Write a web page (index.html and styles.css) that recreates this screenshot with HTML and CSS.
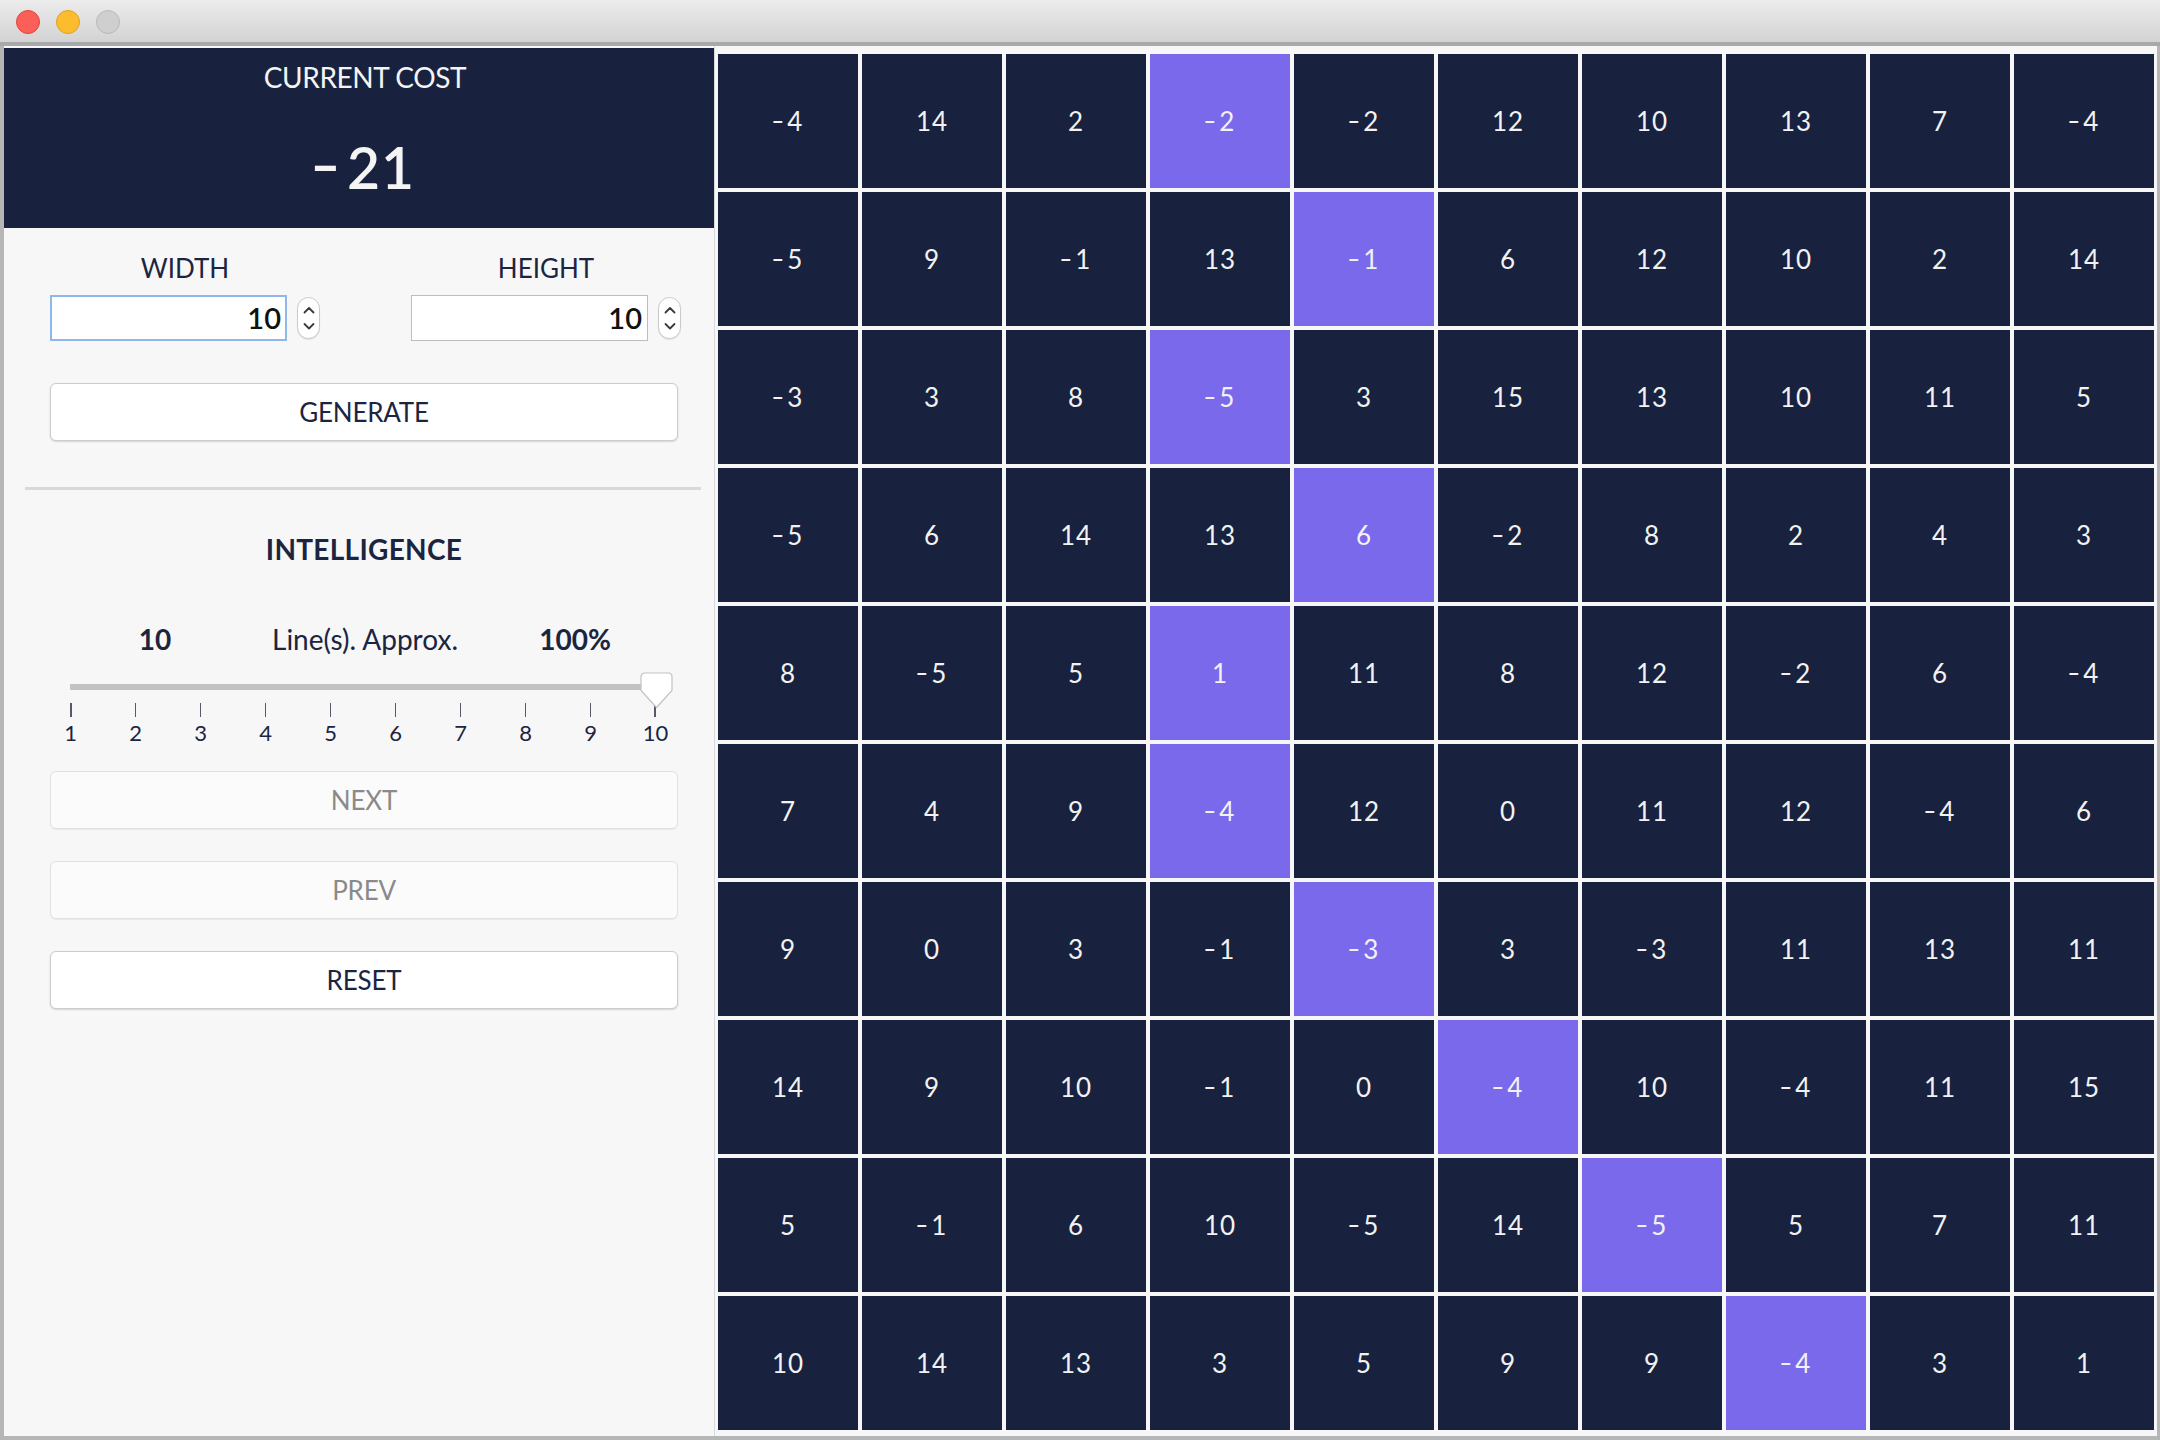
FILE: index.html
```html
<!DOCTYPE html>
<html>
<head>
<meta charset="utf-8">
<title>Min Cost Path</title>
<link rel="stylesheet" href="styles.css">
</head>
<body>
<div class="window">
  <div class="titlebar">
    <span class="light red"></span>
    <span class="light yellow"></span>
    <span class="light gray"></span>
  </div>
  <div class="main">
    <aside class="panel">
      <div class="cost">
        <div class="cost-title">CURRENT COST</div>
        <div class="cost-value"><span class="neg">-</span>21</div>
      </div>
      <div class="content">
        <div class="dims">
          <div class="dim">
            <div class="dim-label">WIDTH</div>
            <div class="dim-row">
              <div class="num-input focused">10</div>
              <div class="spinner">
                <svg width="12" height="30" viewBox="0 0 12 30"><path d="M1.5 9.5 L6 5 L10.5 9.5" fill="none" stroke="#3a3a3a" stroke-width="1.8" stroke-linecap="round" stroke-linejoin="round"/><path d="M1.5 21 L6 25.5 L10.5 21" fill="none" stroke="#3a3a3a" stroke-width="1.8" stroke-linecap="round" stroke-linejoin="round"/></svg>
              </div>
            </div>
          </div>
          <div class="dim">
            <div class="dim-label">HEIGHT</div>
            <div class="dim-row">
              <div class="num-input">10</div>
              <div class="spinner">
                <svg width="12" height="30" viewBox="0 0 12 30"><path d="M1.5 9.5 L6 5 L10.5 9.5" fill="none" stroke="#3a3a3a" stroke-width="1.8" stroke-linecap="round" stroke-linejoin="round"/><path d="M1.5 21 L6 25.5 L10.5 21" fill="none" stroke="#3a3a3a" stroke-width="1.8" stroke-linecap="round" stroke-linejoin="round"/></svg>
              </div>
            </div>
          </div>
        </div>
        <button class="btn btn-generate">GENERATE</button>
        <div class="divider"></div>
        <div class="section-title">INTELLIGENCE</div>
        <div class="stats">
          <span class="stat strong">10</span>
          <span class="stat">Line(s). Approx.</span>
          <span class="stat strong">100%</span>
        </div>
        <div class="slider">
          <div class="track"></div>
          <div class="ticks">
            <i></i><i></i><i></i><i></i><i></i><i></i><i></i><i></i><i></i><i></i>
          </div>
          <svg class="thumb" width="33" height="37" viewBox="0 0 33 37"><path d="M5 1 H28 Q32 1 32 5 V18.5 L16.5 35.5 L1 18.5 V5 Q1 1 5 1 Z" fill="#ffffff" stroke="#c2c2c2" stroke-width="1.2"/></svg>
        </div>
        <div class="tick-labels">
          <span>1</span><span>2</span><span>3</span><span>4</span><span>5</span><span>6</span><span>7</span><span>8</span><span>9</span><span>10</span>
        </div>
        <button class="btn btn-disabled btn-next">NEXT</button>
        <button class="btn btn-disabled">PREV</button>
        <button class="btn">RESET</button>
      </div>
    </aside>
    <section class="board">
      <div class="grid">
        <div class="cell"><span class="m">-</span>4</div><div class="cell">14</div><div class="cell">2</div><div class="cell hl"><span class="m">-</span>2</div><div class="cell"><span class="m">-</span>2</div><div class="cell">12</div><div class="cell">10</div><div class="cell">13</div><div class="cell">7</div><div class="cell"><span class="m">-</span>4</div>
        <div class="cell"><span class="m">-</span>5</div><div class="cell">9</div><div class="cell"><span class="m">-</span>1</div><div class="cell">13</div><div class="cell hl"><span class="m">-</span>1</div><div class="cell">6</div><div class="cell">12</div><div class="cell">10</div><div class="cell">2</div><div class="cell">14</div>
        <div class="cell"><span class="m">-</span>3</div><div class="cell">3</div><div class="cell">8</div><div class="cell hl"><span class="m">-</span>5</div><div class="cell">3</div><div class="cell">15</div><div class="cell">13</div><div class="cell">10</div><div class="cell">11</div><div class="cell">5</div>
        <div class="cell"><span class="m">-</span>5</div><div class="cell">6</div><div class="cell">14</div><div class="cell">13</div><div class="cell hl">6</div><div class="cell"><span class="m">-</span>2</div><div class="cell">8</div><div class="cell">2</div><div class="cell">4</div><div class="cell">3</div>
        <div class="cell">8</div><div class="cell"><span class="m">-</span>5</div><div class="cell">5</div><div class="cell hl">1</div><div class="cell">11</div><div class="cell">8</div><div class="cell">12</div><div class="cell"><span class="m">-</span>2</div><div class="cell">6</div><div class="cell"><span class="m">-</span>4</div>
        <div class="cell">7</div><div class="cell">4</div><div class="cell">9</div><div class="cell hl"><span class="m">-</span>4</div><div class="cell">12</div><div class="cell">0</div><div class="cell">11</div><div class="cell">12</div><div class="cell"><span class="m">-</span>4</div><div class="cell">6</div>
        <div class="cell">9</div><div class="cell">0</div><div class="cell">3</div><div class="cell"><span class="m">-</span>1</div><div class="cell hl"><span class="m">-</span>3</div><div class="cell">3</div><div class="cell"><span class="m">-</span>3</div><div class="cell">11</div><div class="cell">13</div><div class="cell">11</div>
        <div class="cell">14</div><div class="cell">9</div><div class="cell">10</div><div class="cell"><span class="m">-</span>1</div><div class="cell">0</div><div class="cell hl"><span class="m">-</span>4</div><div class="cell">10</div><div class="cell"><span class="m">-</span>4</div><div class="cell">11</div><div class="cell">15</div>
        <div class="cell">5</div><div class="cell"><span class="m">-</span>1</div><div class="cell">6</div><div class="cell">10</div><div class="cell"><span class="m">-</span>5</div><div class="cell">14</div><div class="cell hl"><span class="m">-</span>5</div><div class="cell">5</div><div class="cell">7</div><div class="cell">11</div>
        <div class="cell">10</div><div class="cell">14</div><div class="cell">13</div><div class="cell">3</div><div class="cell">5</div><div class="cell">9</div><div class="cell">9</div><div class="cell hl"><span class="m">-</span>4</div><div class="cell">3</div><div class="cell">1</div>
      </div>
    </section>
  </div>
</div>
</body>
</html>
```
FILE: styles.css
```css
* { box-sizing: border-box; }

html, body {
  margin: 0;
  padding: 0;
  background: #b6b6b8;
}

body {
  font-family: Lato, "Open Sans", "DejaVu Sans", sans-serif;
  color: #1b2541;
}

.window {
  width: 2160px;
  height: 1440px;
  display: flex;
  flex-direction: column;
  background: #b6b6b8;
}

.titlebar {
  height: 46px;
  flex: none;
  display: flex;
  align-items: flex-start;
  gap: 16px;
  padding: 10px 0 0 16px;
  background: linear-gradient(#ececec, #d3d3d3);
  border-bottom: 4px solid #a9a9ab;
}

.light {
  width: 24px;
  height: 24px;
  border-radius: 50%;
  display: block;
}
.light.red { background: #fc5f57; border: 1px solid #e0443e; }
.light.yellow { background: #fdbc2e; border: 1px solid #dea123; }
.light.gray { background: #cfcfcf; border: 1px solid #b9b9b9; }

.main {
  flex: 1;
  display: flex;
  margin: 0 3px 4px 4px;
  background: #f7f7f7;
}

/* ---------- left panel ---------- */
.panel {
  width: 711px;
  flex: none;
  border-right: 1px solid #d6d9de;
  padding-top: 2px;
  background: #f7f7f7;
}

.cost {
  height: 180px;
  background: #18223e;
  color: #f4f4f4;
  text-align: center;
  padding: 12px 0 0 12px;
}

.cost-title {
  font-size: 28px;
  line-height: 34px;
  letter-spacing: -0.4px;
}

.cost-value {
  margin-top: 39px;
  font-size: 57px;
  line-height: 68px;
  font-weight: 600;
  letter-spacing: 1px;
}
.cost-value .neg {
  display: inline-block;
  transform: scaleX(1.45);
  margin-right: 10px;
  position: relative;
  top: -3px;
}

.content {
  padding: 24px 36px 0 46px;
}

.dims {
  display: grid;
  grid-template-columns: 270px 270px;
  column-gap: 91px;
}

.dim-label {
  font-size: 26px;
  line-height: 32px;
  text-align: center;
  margin-bottom: 11px;
}

.dim-row {
  display: flex;
  align-items: center;
  gap: 10px;
}

.num-input {
  width: 237px;
  height: 46px;
  background: #ffffff;
  border: 1px solid #bdbdbd;
  text-align: right;
  padding-right: 5px;
  font-size: 29px;
  line-height: 44px;
  font-weight: 600;
  color: #111111;
}
.num-input.focused {
  border: 2px solid #8fb7ea;
  line-height: 42px;
  padding-right: 4px;
}

.spinner {
  width: 23px;
  height: 42px;
  background: #ffffff;
  border: 1px solid #cacaca;
  border-radius: 12px;
  display: flex;
  align-items: center;
  justify-content: center;
  box-shadow: 0 1px 1px rgba(0,0,0,0.08);
}

.btn {
  display: block;
  width: 100%;
  height: 58px;
  margin: 32px 0 0 0;
  padding: 0;
  background: #ffffff;
  border: 1px solid #cbcbcb;
  border-radius: 6px;
  box-shadow: 0 1px 2px rgba(0,0,0,0.14);
  font-family: Lato, "Open Sans", sans-serif;
  font-size: 26px;
  color: #1b2541;
  letter-spacing: -0.2px;
}

.btn-generate { margin-top: 42px; }
.btn-next { margin-top: 25px; }

.btn-disabled {
  background: #fbfbfb;
  border-color: #e1e1e1;
  color: #8a8a8a;
  box-shadow: 0 1px 1px rgba(0,0,0,0.06);
}

.divider {
  height: 3px;
  background: #d9d9d9;
  margin: 46px -23px 0 -25px;
}

.section-title {
  margin-top: 42px;
  font-size: 28px;
  line-height: 34px;
  font-weight: 700;
  text-align: center;
  letter-spacing: 0.3px;
}

.stats {
  margin-top: 56px;
  display: grid;
  grid-template-columns: repeat(3, 210px);
  font-size: 28px;
  line-height: 34px;
}
.stat { text-align: center; }
.stat.strong { font-weight: 700; }

.slider {
  position: relative;
  height: 50px;
  margin-top: 14px;
}

.track {
  position: absolute;
  left: 20px;
  right: 22px;
  top: 14px;
  height: 6px;
  background: #c2c2c2;
  border-radius: 1px;
}

.ticks {
  position: absolute;
  left: 20px;
  right: 22px;
  top: 33px;
  height: 14px;
  display: flex;
  justify-content: space-between;
}
.ticks i {
  width: 1.5px;
  height: 14px;
  background: #555a66;
}

.thumb {
  position: absolute;
  left: 590px;
  top: 2px;
}

.tick-labels {
  margin: 0 22px 0 20px;
  display: flex;
  justify-content: space-between;
  font-size: 22px;
  line-height: 26px;
}
.tick-labels span {
  width: 1px;
  display: flex;
  justify-content: center;
  white-space: nowrap;
}

/* ---------- board ---------- */
.board {
  flex: 1;
  padding: 8px 3px 6px 3px;
}

.grid {
  display: grid;
  grid-template-columns: repeat(10, 140px);
  grid-template-rows: repeat(10, 134px);
  gap: 4px;
}

.cell {
  background: #18223e;
  color: #f2f2f2;
  display: flex;
  align-items: center;
  justify-content: center;
  font-size: 26px;
  letter-spacing: 1px;
}

.cell .m {
  display: inline-block;
  transform: scaleX(1.35);
  margin-right: 4px;
  position: relative;
  top: -1px;
}

.cell.hl {
  background: #7b69ec;
}
```
